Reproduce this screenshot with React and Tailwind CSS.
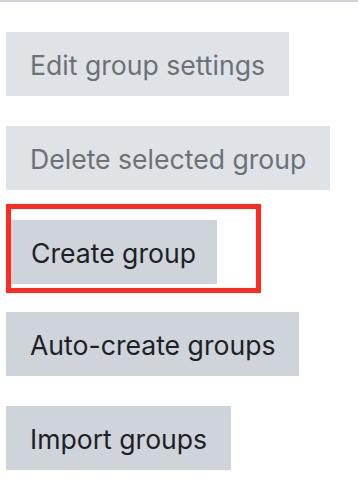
import React from "react";

const Btn = ({ label, disabled, className = "pl-[24px] pr-[24px]" }) => (
  <div
    className={
      disabled
        ? `flex h-[64px] items-center bg-[#dfe3e7] pt-[2px] text-[#6c7177] ${className}`
        : `flex h-[64px] items-center bg-[#ced4da] pt-[2px] text-[#1d2125] ${className}`
    }
  >
    {label}
  </div>
);

const App = () => {
  return (
    <div
      className="h-[494px] w-[358px] overflow-hidden bg-white text-[26.6px] leading-none"
      style={{ fontFamily: "Inter, 'Liberation Sans', sans-serif" }}
    >
      <div className="h-[2px] w-full bg-[#ced4da]" />
      <div className="flex flex-col items-start pl-[6px] pt-[30px]">
        <Btn label="Edit group settings" disabled />
        <div className="mt-[30px]">
          <Btn label="Delete selected group" disabled />
        </div>
        <div className="mt-[14px] w-[255px] border-[5px] border-[#ff2a20] pt-[11px] pb-[4px]">
          <div className="inline-flex">
            <Btn label="Create group" className="pl-[20px] pr-[21px]" />
          </div>
        </div>
        <div className="mt-[19px]">
          <Btn label="Auto-create groups" />
        </div>
        <div className="mt-[30px]">
          <Btn label="Import groups" />
        </div>
      </div>
    </div>
  );
};

export default App;
